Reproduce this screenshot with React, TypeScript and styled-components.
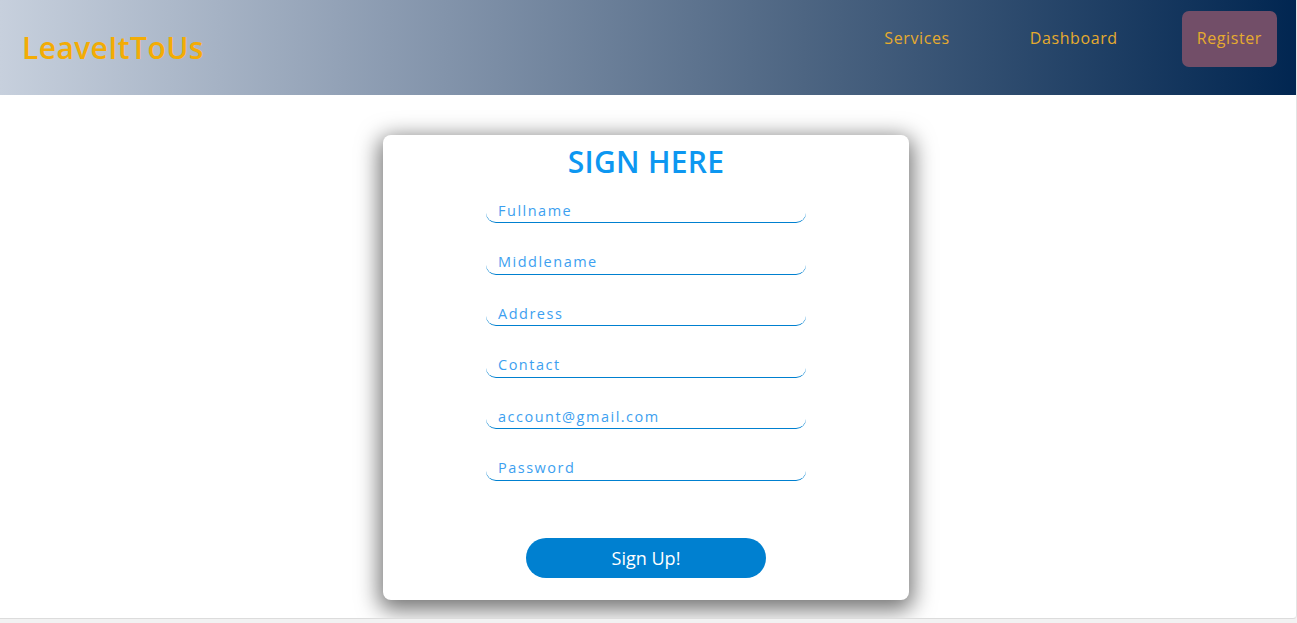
import React from "react";
import styled, { createGlobalStyle } from "styled-components";

const Global = createGlobalStyle`
  html, body { margin: 0; padding: 0; background: #f2f2f2; }
  body { font-family: "Open Sans", "Noto Sans", sans-serif; }
  * { box-sizing: border-box; }
`;

const Page = styled.div`
  width: 1297px;
  height: 619px;
  background: #ffffff;
  border-bottom: 1px solid #dcdcdc;
  border-right: 1px solid #e4e4e4;
  border-bottom-right-radius: 4px;
  display: flex;
  flex-direction: column;
  overflow: hidden;
`;

const Header = styled.header`
  height: 95px;
  flex: none;
  background: linear-gradient(to right, #c7d0dd 0%, #8b9bb1 30%, #4d6582 62%, #012651 100%);
  display: flex;
  align-items: center;
  padding: 0 19px 0 22px;
`;

const Logo = styled.div`
  font-family: "Open Sans", "Noto Sans", sans-serif;
  font-size: 30px;
  font-weight: 600;
  letter-spacing: 0.4px;
  color: #f3ac05;
  flex: 1;
`;

const Nav = styled.nav`
  display: flex;
  align-items: center;
  align-self: flex-start;
  margin-top: 11px;
`;

const NavLink = styled.a<{ $boxed?: boolean }>`
  font-family: "Open Sans", "Noto Sans", sans-serif;
  font-size: 16px;
  letter-spacing: 0.6px;
  color: #e6ab2e;
  text-decoration: none;
  display: flex;
  align-items: center;
  justify-content: center;
  border-radius: 7px;
  height: ${(p) => (p.$boxed ? "56px" : "54px")};
  padding: ${(p) => (p.$boxed ? "0 15px 2px" : "0")};
  background: ${(p) => (p.$boxed ? "#724e68" : "transparent")};
  margin-left: ${(p) => (p.$boxed ? "64px" : "80px")};
  align-self: ${(p) => (p.$boxed ? "center" : "flex-start")};
`;

const Main = styled.main`
  flex: 1;
  display: flex;
  justify-content: center;
  padding-top: 40px;
`;

const Card = styled.form`
  width: 526px;
  height: 465px;
  margin-left: -4px;
  background: #fff;
  border-radius: 8px;
  box-shadow: 0 6px 22px 4px rgba(0, 0, 0, 0.55);
  display: flex;
  flex-direction: column;
  align-items: center;
  padding-top: 8px;
`;

const Title = styled.h1`
  margin: 0 0 18px;
  font-family: "Open Sans", "Noto Sans", sans-serif;
  font-weight: 600;
  font-size: 30px;
  letter-spacing: 0.3px;
  color: #0d97f1;
  line-height: 38px;
`;

const Fields = styled.div`
  display: flex;
  flex-direction: column;
  gap: 27.6px;
`;

const Input = styled.input`
  width: 320px;
  height: 24px;
  border: none;
  border-bottom: 1px solid #0080d0;
  border-radius: 10px;
  padding: 0 12px 1px;
  font-family: "Open Sans", "Noto Sans", sans-serif;
  font-size: 14.5px;
  letter-spacing: 1.5px;
  outline: none;
  background: transparent;
  &::placeholder { color: #3d9ff0; }
`;

const Button = styled.button`
  margin-top: 57px;
  width: 240px;
  height: 40px;
  border: none;
  border-radius: 20px;
  background: #0080d0;
  color: #fff;
  font-family: "Open Sans", "Noto Sans", sans-serif;
  font-size: 18px;
  cursor: pointer;
`;

const fields = ["Fullname", "Middlename", "Address", "Contact", "account@gmail.com", "Password"];

export default function App() {
  return (
    <>
      <Global />
      <Page>
        <Header>
          <Logo>LeaveItToUs</Logo>
          <Nav>
            <NavLink href="#">Services</NavLink>
            <NavLink href="#">Dashboard</NavLink>
            <NavLink href="#" $boxed>Register</NavLink>
          </Nav>
        </Header>
        <Main>
          <Card onSubmit={(e) => e.preventDefault()}>
            <Title>SIGN HERE</Title>
            <Fields>
              {fields.map((f) => (
                <Input key={f} placeholder={f} type={f === "Password" ? "password" : "text"} />
              ))}
            </Fields>
            <Button type="submit">Sign Up!</Button>
          </Card>
        </Main>
      </Page>
    </>
  );
}
